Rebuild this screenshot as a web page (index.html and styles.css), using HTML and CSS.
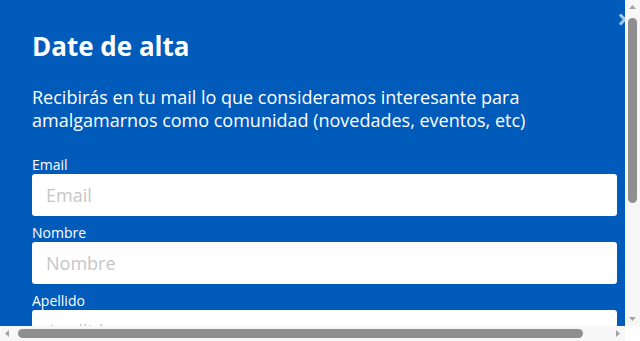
FILE: index.html
```html
<!DOCTYPE html>
<html lang="es">
<head>
    <meta charset="UTF-8">
    <meta name="viewport" content="width=device-width, initial-scale=1.0">
    <title>Date de alta</title>
    <link rel="stylesheet" href="styles.css">
</head>
<body>
    <div class="frame">
        <div class="page">
            <div class="modal">
                <a href="#" class="modal-close">&times;</a>
                <h1>Date de alta</h1>
                <p class="intro">Recibirás en tu mail lo que consideramos interesante para amalgamarnos como comunidad (novedades, eventos, etc)</p>

                <form class="signup">
                    <label for="email">Email</label>
                    <input type="email" id="email" placeholder="Email">

                    <label for="nombre">Nombre</label>
                    <input type="text" id="nombre" placeholder="Nombre">

                    <label for="apellido">Apellido</label>
                    <input type="text" id="apellido" placeholder="Apellido">

                    <button type="submit" class="submit">Suscribirme</button>
                </form>
            </div>
        </div>

        <!-- scrollbars of the window -->
        <div class="vbar">
            <svg class="arrow" width="15" height="15" viewBox="0 0 15 15"><polygon points="4,9 11,9 7.5,5" /></svg>
            <div class="vtrack"><div class="vthumb"></div></div>
            <svg class="arrow" width="15" height="15" viewBox="0 0 15 15"><polygon points="4,6 11,6 7.5,10" /></svg>
        </div>
        <div class="hbar">
            <svg class="arrow" width="15" height="15" viewBox="0 0 15 15"><polygon points="9,4 9,11 5,7.5" /></svg>
            <div class="htrack"><div class="hthumb"></div></div>
            <svg class="arrow" width="15" height="15" viewBox="0 0 15 15"><polygon points="6,4 6,11 10,7.5" /></svg>
        </div>
        <div class="corner"></div>
    </div>
</body>
</html>
```

FILE: styles.css
```css
* {
    margin: 0;
    padding: 0;
    box-sizing: border-box;
}
body {
    font-family: 'Open Sans', 'Liberation Sans', sans-serif;
    background-color: #fff;
    color: #fff;
}
.frame {
    display: grid;
    grid-template-columns: 625px 15px;
    grid-template-rows: 326px 15px;
    width: 640px;
    height: 341px;
}
.page {
    overflow: hidden;
}
.modal {
    position: relative;
    width: 656px;
    min-height: 520px;
    padding: 29px 32px 40px;
    background-color: #005bbb;
}
.modal-close {
    position: absolute;
    top: 4px;
    right: 24px;
    color: #a9c9ef;
    font-size: 26px;
    font-weight: bold;
    line-height: 30px;
    text-decoration: none;
}
h1 {
    font-size: 26px;
    font-weight: bold;
    line-height: 34px;
}
.intro {
    margin-top: 23px;
    font-size: 18px;
    line-height: 23px;
}
.signup {
    margin-top: 24px;
    width: 585px;
}
.signup label {
    display: block;
    font-size: 14px;
    line-height: 18px;
}
.signup input {
    display: block;
    width: 100%;
    height: 42px;
    margin-bottom: 8px;
    padding: 0 14px;
    border: none;
    border-radius: 3px;
    background: #fff;
    font-family: inherit;
    font-size: 18px;
    color: #333;
}
.signup input::placeholder {
    color: #c6c6c6;
}
.submit {
    margin-top: 16px;
    padding: 10px 24px;
    border: none;
    border-radius: 3px;
    background-color: #fff;
    color: #005bbb;
    font-family: inherit;
    font-size: 16px;
    font-weight: bold;
}

/* scrollbars */
.vbar, .hbar {
    display: flex;
    background-color: #f7f7f7;
}
.vbar {
    flex-direction: column;
}
.arrow {
    flex: none;
    fill: #a3a3a3;
}
.vtrack, .htrack {
    flex: 1;
}
.vthumb {
    width: 9px;
    height: 185px;
    margin: 3px 0 0 3px;
    border-radius: 5px;
    background-color: #8f8f8f;
}
.hthumb {
    width: 565px;
    height: 9px;
    margin: 3px 0 0 3px;
    border-radius: 5px;
    background-color: #8f8f8f;
}
.corner {
    background-color: #fff;
}
```
